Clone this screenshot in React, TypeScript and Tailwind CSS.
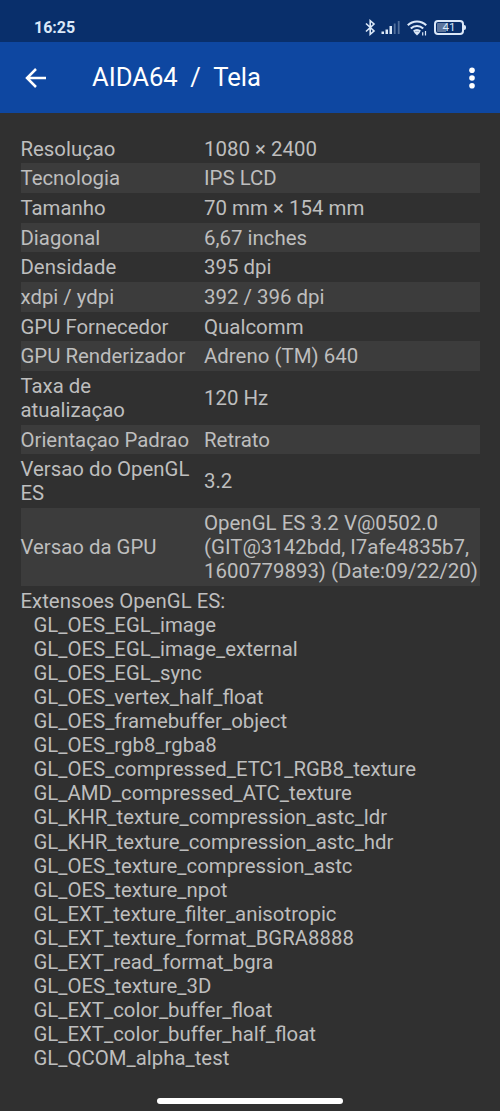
import clsx from "clsx";

const rows = [
  { label: "Resoluçao", value: "1080 × 2400" },
  { label: "Tecnologia", value: "IPS LCD" },
  { label: "Tamanho", value: "70 mm × 154 mm" },
  { label: "Diagonal", value: "6,67 inches" },
  { label: "Densidade", value: "395 dpi" },
  { label: "xdpi / ydpi", value: "392 / 396 dpi" },
  { label: "GPU Fornecedor", value: "Qualcomm" },
  { label: "GPU Renderizador", value: "Adreno (TM) 640" },
  { label: "Taxa de\natualizaçao", value: "120 Hz" },
  { label: "Orientaçao Padrao", value: "Retrato" },
  { label: "Versao do OpenGL\nES", value: "3.2" },
  {
    label: "Versao da GPU",
    value:
      "OpenGL ES 3.2 V@0502.0\n(GIT@3142bdd, I7afe4835b7,\n1600779893) (Date:09/22/20)",
  },
];

const extensions = [
  "GL_OES_EGL_image",
  "GL_OES_EGL_image_external",
  "GL_OES_EGL_sync",
  "GL_OES_vertex_half_float",
  "GL_OES_framebuffer_object",
  "GL_OES_rgb8_rgba8",
  "GL_OES_compressed_ETC1_RGB8_texture",
  "GL_AMD_compressed_ATC_texture",
  "GL_KHR_texture_compression_astc_ldr",
  "GL_KHR_texture_compression_astc_hdr",
  "GL_OES_texture_compression_astc",
  "GL_OES_texture_npot",
  "GL_EXT_texture_filter_anisotropic",
  "GL_EXT_texture_format_BGRA8888",
  "GL_EXT_read_format_bgra",
  "GL_OES_texture_3D",
  "GL_EXT_color_buffer_float",
  "GL_EXT_color_buffer_half_float",
  "GL_QCOM_alpha_test",
];

function StatusBar() {
  return (
    <div className="flex h-[42px] items-center justify-between bg-[#092f6b] pt-[13px] pr-[34px] pl-[34px] text-[#dbe8f8]">
      <span className="text-[16px] leading-none font-bold">16:25</span>
      <div className="flex items-center">
        <svg width="11" height="17" viewBox="0 0 11 17" fill="none" stroke="currentColor" strokeWidth="1.6">
          <path d="M1 4.5 9 12 5.2 15.3V1.7L9 5 1 12.5" />
        </svg>
        <svg className="ml-[5px]" width="20" height="15" viewBox="0 0 20 15" fill="currentColor">
          <rect x="0.5" y="11.5" width="2.5" height="2.5" />
          <rect x="4.5" y="9.5" width="2.5" height="4.5" />
          <rect x="8.5" y="6" width="2.5" height="8" />
          <rect x="12.8" y="3.5" width="1.8" height="10.5" opacity="0.35" />
          <rect x="16.8" y="1" width="1.8" height="13" opacity="0.35" />
        </svg>
        <svg className="ml-[6px]" width="21" height="16" viewBox="0 0 21 16" fill="none" stroke="currentColor" strokeWidth="2.1">
          <path d="M0.8 5.3a13 13 0 0 1 18.4 0M3.8 8.5a8.8 8.8 0 0 1 12.4 0M6.7 11.5a4.7 4.7 0 0 1 6.6 0" />
          <path d="M10 15.5 7 12.5a4.2 4.2 0 0 1 6 0Z" fill="currentColor" stroke="none" />
          <path d="M15.7 12.3v3.2M18.5 11v4.5" strokeWidth="1.2" />
        </svg>
        <div className="ml-[6px] flex items-center">
          <div className="flex h-[15px] w-[30px] items-center justify-center rounded-[4px] border-2 border-current bg-linear-to-r from-[#5d759c] from-40% to-transparent to-40% bg-clip-content p-[1px] text-[11.5px] leading-none text-[#dbe8f8]">
            41
          </div>
          <div className="h-[5px] w-[2px] rounded-r-sm bg-current" />
        </div>
      </div>
    </div>
  );
}

function AppBar() {
  return (
    <header className="flex h-[71px] items-center bg-[#0e47a1] pr-[25px] pl-[25px] text-white">
      <svg width="22" height="20" viewBox="0 0 22 20" fill="none" stroke="currentColor" strokeWidth="2.5">
        <path d="M21 10H2.5M11 1 2 10l9 9" />
      </svg>
      <h1 className="ml-[45px] flex-1 pt-px text-[25.6px] leading-none whitespace-pre">
        AIDA64{"  /  "}Tela
      </h1>
      <svg width="6" height="22" viewBox="0 0 6 22" fill="currentColor">
        <circle cx="3" cy="3.2" r="2.8" />
        <circle cx="3" cy="11" r="2.8" />
        <circle cx="3" cy="18.8" r="2.8" />
      </svg>
    </header>
  );
}

export default function App() {
  return (
    <div className="flex h-[1111px] w-[500px] flex-col overflow-hidden bg-[#303030] font-['Roboto',sans-serif] text-[#bebebe]">
      <StatusBar />
      <AppBar />
      <main className="flex-1 px-[20.5px] pt-[20.8px] text-[20.37px] leading-[24.06px]">
        {rows.map((row, i) => (
          <div
            key={row.label}
            className={clsx(
              "flex items-center py-[2.8px] whitespace-pre",
              i % 2 === 1 && "bg-[#3c3c3c]",
            )}
          >
            <div className="w-[183.5px] shrink-0">{row.label}</div>
            <div className="text-[20.45px]">{row.value}</div>
          </div>
        ))}
        <div className="pt-[3px]">Extensoes OpenGL ES:</div>
        <ul className="pl-[13px]">
          {extensions.map((name) => (
            <li key={name}>{name}</li>
          ))}
        </ul>
      </main>
      <div className="mx-auto mb-[7px] h-[6px] w-[186px] rounded-full bg-white" />
    </div>
  );
}
